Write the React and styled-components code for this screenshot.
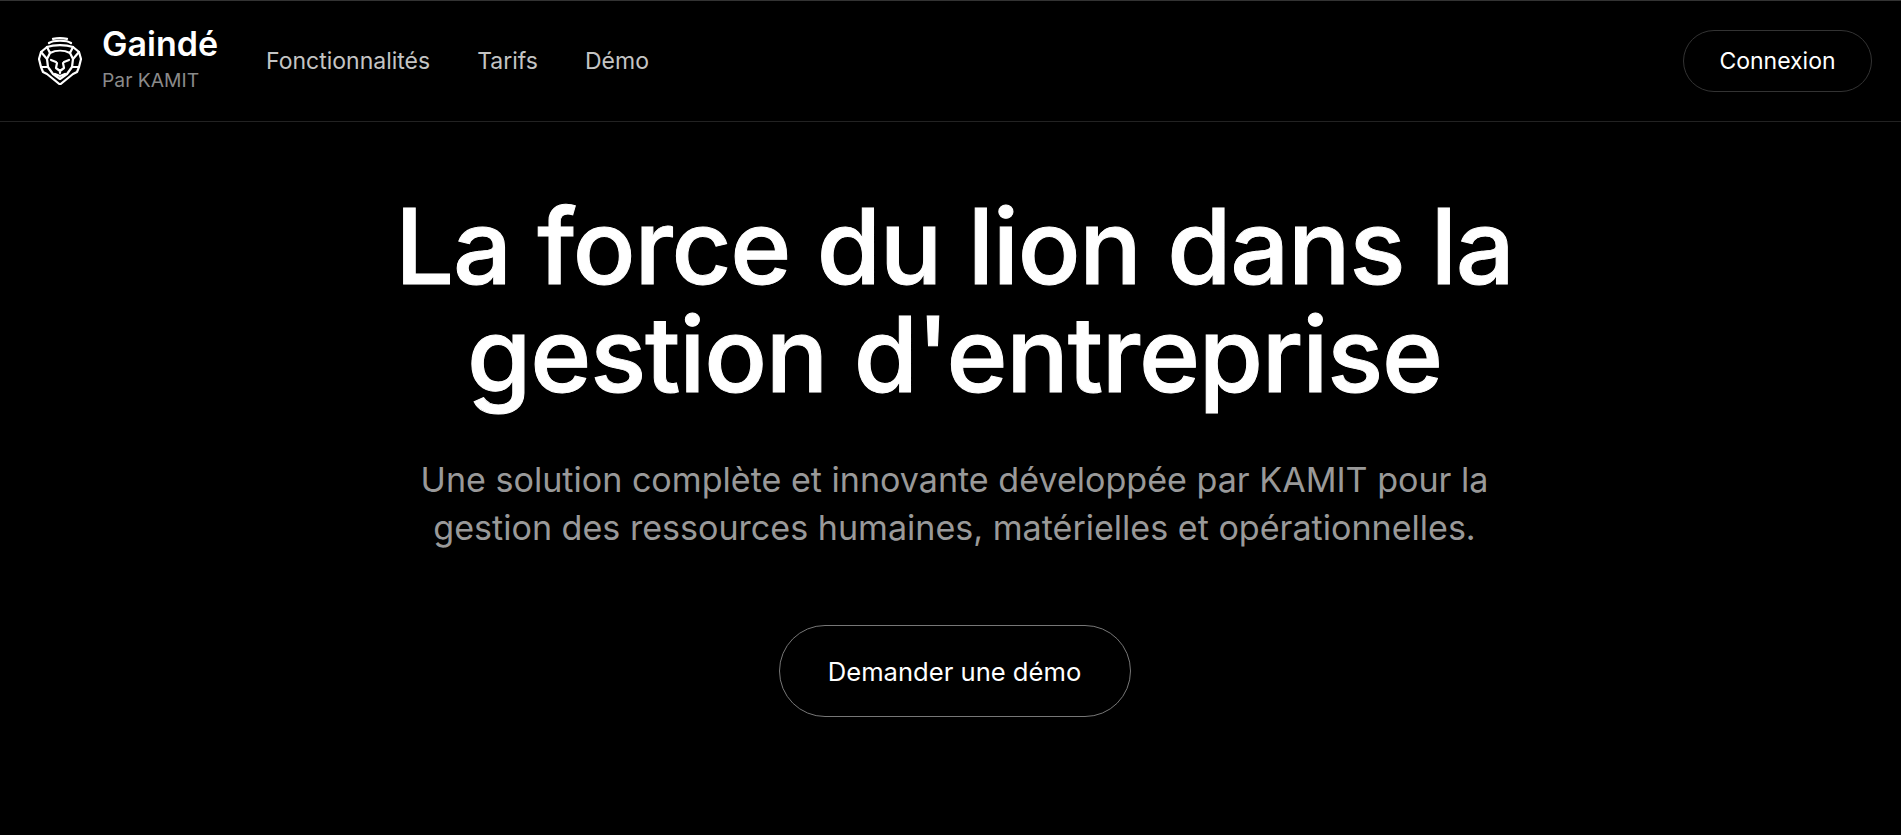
import React from 'react';
import styled, { createGlobalStyle } from 'styled-components';

const GlobalStyle = createGlobalStyle`
    html, body {
        margin: 0;
        padding: 0;
        background: #000;
    }

    body {
        font-family: 'Inter', 'Liberation Sans', sans-serif;
        color: #fff;
    }
`;

const Page = styled.div`
    min-height: 835px;
    background: #000;
    border-top: 1px solid #333;
    overflow: hidden;
`;

const Header = styled.header`
    display: flex;
    align-items: center;
    justify-content: space-between;
    height: 120px;
    padding: 0 29px 0 38px;
    border-bottom: 1px solid #222;
`;

const Left = styled.div`
    display: flex;
    align-items: center;
`;

const Brand = styled.div`
    display: flex;
    align-items: center;
    gap: 20px;
    margin-right: 48px;
`;

const BrandText = styled.div`
    display: flex;
    flex-direction: column;
    gap: 5px;
    padding-bottom: 4px;
`;

const BrandName = styled.span`
    font-size: 34px;
    line-height: 36px;
    font-weight: 600;
`;

const BrandSub = styled.span`
    font-size: 19.3px;
    line-height: 26px;
    color: #8a8a8a;
`;

const Nav = styled.nav`
    display: flex;
    gap: 47px;
`;

const NavLink = styled.a`
    font-size: 23px;
    color: #c4c4c4;
    text-decoration: none;
`;

const LoginButton = styled.button`
    height: 62px;
    width: 189px;
    background: transparent;
    border: 1px solid #333;
    border-radius: 31px;
    color: #fff;
    font-family: inherit;
    font-size: 23px;
`;

const Hero = styled.main`
    display: flex;
    flex-direction: column;
    align-items: center;
    padding: 70px 0 0 8px;
`;

const Title = styled.h1`
    margin: 0;
    font-size: 104px;
    line-height: 108px;
    font-weight: 500;
    text-align: center;
    letter-spacing: -1.2px;
    -webkit-text-stroke: 1px #fff;
`;

const Subtitle = styled.p`
    margin: 48px 0 0;
    font-size: 34.1px;
    line-height: 48px;
    color: #999;
    text-align: center;
`;

const DemoButton = styled.button`
    margin-top: 73px;
    width: 352px;
    height: 92px;
    background: transparent;
    border: 1px solid #777;
    border-radius: 46px;
    color: #fff;
    font-family: inherit;
    font-size: 25.6px;
`;

function LionIcon() {
    return (
        <svg width="44" height="48" viewBox="0 0 44 48" fill="none" stroke="#fff" strokeWidth="2.2" strokeLinejoin="round" strokeLinecap="round">
            <path d="M11 6C15 3 29 3 33 6M15 1.800C19 1 25 1 29 1.800" />
            <path d="M9 10 3 15 1 22l2 8 2 5 4 2 13 10.500L35 37l4-2 2-5 2-8-2-7-6-5C28 7.500 16 7.500 9 10z" />
            <path d="M9 10l3 6c6-3 14-3 20 0l3-6" />
            <path d="M12 16l-3 6 1 8 5 7 7 5 7-5 5-7 1-8-3-6" />
            <path d="M3 15l6 7M41 15l-6 7M3 30h7M41 30h-7" />
            <path d="M13 23l5 2M31 23l-5 2" />
            <path d="M19 26l-1 5 4 3 4-3-1-5M22 34v2M17 37l5 2 5-2" />
        </svg>
    );
}

const links = ['Fonctionnalités', 'Tarifs', 'Démo'];

export default function App() {
    return (
        <Page>
            <GlobalStyle />
            <Header>
                <Left>
                    <Brand>
                        <LionIcon />
                        <BrandText>
                            <BrandName>Gaindé</BrandName>
                            <BrandSub>Par KAMIT</BrandSub>
                        </BrandText>
                    </Brand>
                    <Nav>
                        {links.map(label => (
                            <NavLink key={label}>{label}</NavLink>
                        ))}
                    </Nav>
                </Left>
                <LoginButton>Connexion</LoginButton>
            </Header>
            <Hero>
                <Title>
                    La force du lion dans la
                    <br />
                    gestion d'entreprise
                </Title>
                <Subtitle>
                    Une solution complète et innovante développée par KAMIT pour la
                    <br />
                    gestion des ressources humaines, matérielles et opérationnelles.
                </Subtitle>
                <DemoButton>Demander une démo</DemoButton>
            </Hero>
        </Page>
    );
}
